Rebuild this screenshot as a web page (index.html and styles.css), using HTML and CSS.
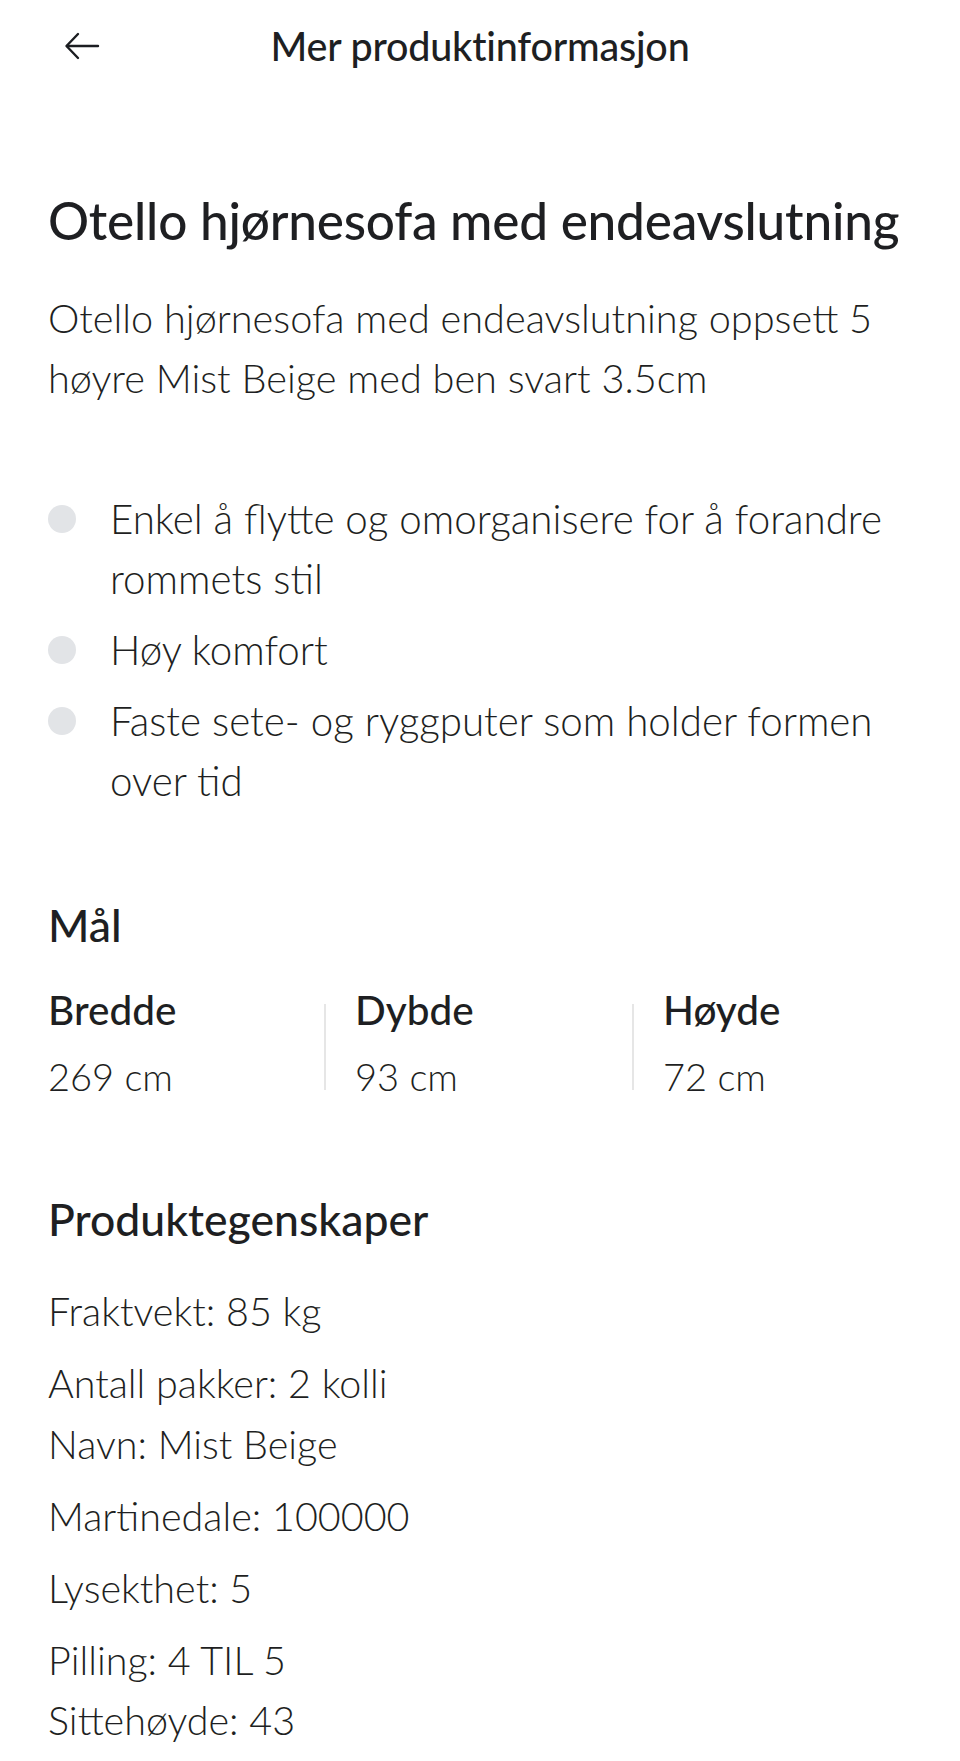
FILE: index.html
```html
<!DOCTYPE html>
<html lang="no">
<head>
<meta charset="utf-8">
<title>Mer produktinformasjon</title>
<link rel="stylesheet" href="styles.css">
</head>
<body>
<header class="topbar">
  <button class="back" aria-label="Tilbake">
    <svg width="36" height="28" viewBox="0 0 36 28" fill="none" stroke="#1b1d21" stroke-width="2.4" stroke-linecap="round" stroke-linejoin="round"><path d="M34 14H3"/><path d="M14 2L2.5 14L14 26"/></svg>
  </button>
  <h2 class="topbar-title">Mer produktinformasjon</h2>
</header>
<main class="content">
  <h1 class="title">Otello hjørnesofa med endeavslutning</h1>
  <p class="desc">Otello hjørnesofa med endeavslutning oppsett 5 høyre Mist Beige med ben svart 3.5cm</p>
  <ul class="bullets">
    <li>Enkel å flytte og omorganisere for å forandre rommets stil</li>
    <li>Høy komfort</li>
    <li>Faste sete- og ryggputer som holder formen over tid</li>
  </ul>
  <h3 class="section">Mål</h3>
  <div class="dims">
    <div class="dim"><div class="dim-label">Bredde</div><div class="dim-value">269 cm</div></div>
    <div class="dim"><div class="dim-label">Dybde</div><div class="dim-value">93 cm</div></div>
    <div class="dim"><div class="dim-label">Høyde</div><div class="dim-value">72 cm</div></div>
  </div>
  <h3 class="section section-props">Produktegenskaper</h3>
  <div class="props">
    <p>Fraktvekt: 85 kg</p>
    <p>Antall pakker: 2 kolli<br>Navn: Mist Beige</p>
    <p>Martinedale: 100000</p>
    <p>Lysekthet: 5</p>
    <p>Pilling: 4 TIL 5<br>Sittehøyde: 43</p>
  </div>
</main>
</body>
</html>
```
FILE: styles.css
```css
* { box-sizing: border-box; }
html, body { margin: 0; padding: 0; background: #ffffff; }
body {
  font-family: Lato, "Liberation Sans", sans-serif;
  color: #1e1f22;
  width: 960px;
  height: 1761px;
  overflow: hidden;
}
.topbar {
  position: relative;
  height: 92px;
  display: flex;
  align-items: center;
  justify-content: center;
}
.back {
  position: absolute;
  left: 64px;
  top: 32px;
  width: 36px;
  height: 28px;
  padding: 0;
  border: 0;
  background: none;
  display: flex;
}
.topbar-title {
  margin: 0;
  font-size: 39.5px;
  font-weight: 500;
  line-height: 60px;
  letter-spacing: -0.2px;
}
.content { padding: 0 48px; }
.title {
  margin: 98px 0 0;
  font-size: 51.3px;
  font-weight: 500;
  line-height: 60px;
  letter-spacing: -0.2px;
}
.desc {
  margin: 38px 0 0;
  font-size: 39.7px;
  font-weight: 300;
  line-height: 60px;
}
.bullets {
  list-style: none;
  margin: 81px 0 0;
  padding: 0;
  display: flex;
  flex-direction: column;
  gap: 11px;
}
.bullets li {
  position: relative;
  padding-left: 62px;
  font-size: 40.3px;
  font-weight: 300;
  line-height: 60px;
}
.bullets li::before {
  content: "";
  position: absolute;
  left: 0;
  top: 16px;
  width: 28px;
  height: 28px;
  border-radius: 50%;
  background: #e2e4e7;
}
.section {
  margin: 84px 0 0;
  font-size: 44.5px;
  font-weight: 500;
  line-height: 60px;
}
.dims {
  margin-top: 25px;
  display: grid;
  grid-template-columns: 276px 308px 1fr;
}
.dim { position: relative; }
.dim + .dim { padding-left: 31px; }
.dim + .dim::before {
  content: "";
  position: absolute;
  left: 0;
  top: 24px;
  bottom: 16px;
  width: 2px;
  background: #e6e6e6;
}
.dim-label {
  font-size: 40.5px;
  font-weight: 500;
  line-height: 60px;
}
.dim-value {
  margin-top: 6px;
  font-size: 38px;
  font-weight: 300;
  line-height: 60px;
}
.section-props { margin-top: 83px; }
.props {
  margin-top: 32px;
  display: flex;
  flex-direction: column;
  gap: 11.5px;
}
.props p {
  margin: 0;
  font-size: 39.5px;
  font-weight: 300;
  line-height: 60.5px;
}
```
